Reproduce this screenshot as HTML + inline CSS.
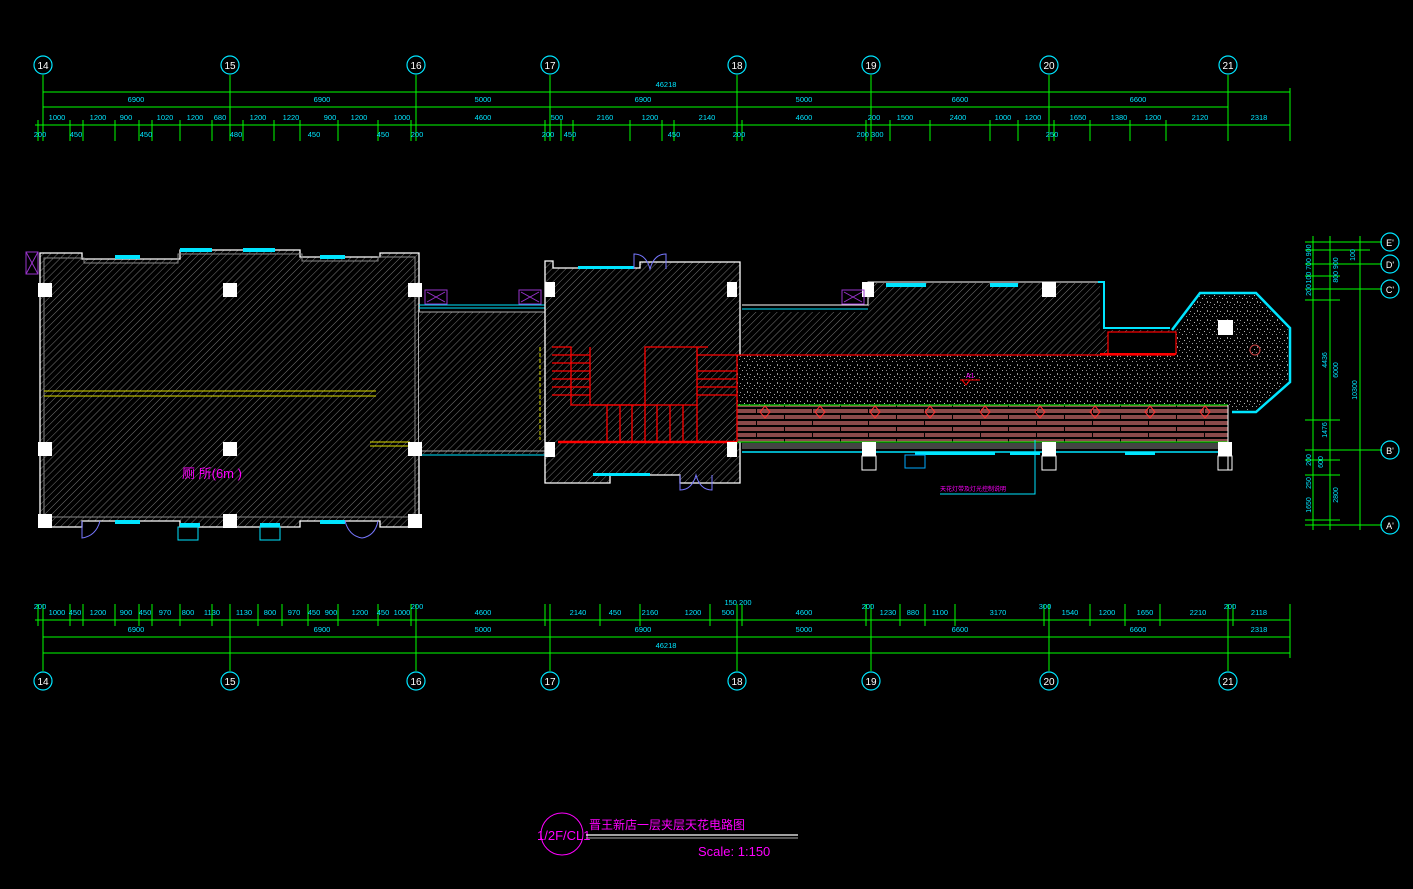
<!DOCTYPE html>
<html><head><meta charset="utf-8"><style>
html,body{margin:0;padding:0;background:#000;overflow:hidden}
svg{display:block}
text{font-family:"Liberation Sans","Noto Sans CJK SC",sans-serif}
</style></head><body>
<svg width="1413" height="889" viewBox="0 0 1413 889" xmlns="http://www.w3.org/2000/svg">
<defs>
<pattern id="h" width="5" height="5" patternUnits="userSpaceOnUse" patternTransform="rotate(45)">
<rect width="5" height="5" fill="#000"/><line x1="0" y1="0" x2="0" y2="5" stroke="#777" stroke-width="1"/>
</pattern>
<pattern id="d" width="10" height="9" patternUnits="userSpaceOnUse">
<rect width="10" height="9" fill="#000"/>
<rect x="2" y="1" width="1" height="1" fill="#aaa"/><rect x="7" y="4" width="1" height="2" fill="#999"/>
<rect x="4" y="7" width="1" height="1" fill="#bbb"/><rect x="9" y="8" width="1" height="1" fill="#888"/>
<rect x="6" y="1" width="1" height="1" fill="#888"/><rect x="0" y="5" width="1" height="1" fill="#999"/>
</pattern>
<pattern id="b" width="56" height="12" patternUnits="userSpaceOnUse">
<rect width="56" height="12" fill="#000"/>
<rect x="0" y="1" width="56" height="4" fill="#8a4a4a"/><rect x="0" y="7" width="56" height="4" fill="#8a4a4a"/>
<rect x="28" y="0" width="1" height="6" fill="#000"/><rect x="0" y="6" width="1" height="6" fill="#000"/>
</pattern>
</defs>

<g stroke="#00ff00" stroke-width="1" fill="none">
<line x1="43" y1="92" x2="1290" y2="92"/>
<line x1="43" y1="107" x2="1228" y2="107"/>
<line x1="35" y1="125" x2="1290" y2="125"/>
<line x1="1290" y1="88" x2="1290" y2="141"/>
<line x1="1228" y1="75" x2="1228" y2="141"/>
<line x1="1049" y1="75" x2="1049" y2="141"/>
<line x1="871" y1="75" x2="871" y2="141"/>
<line x1="737" y1="75" x2="737" y2="141"/>
<line x1="550" y1="75" x2="550" y2="141"/>
<line x1="416" y1="75" x2="416" y2="141"/>
<line x1="230" y1="75" x2="230" y2="141"/>
<line x1="43" y1="75" x2="43" y2="141"/>
<g>
<line x1="38" y1="120" x2="38" y2="141"/><line x1="70" y1="120" x2="70" y2="141"/><line x1="83" y1="120" x2="83" y2="141"/>
<line x1="115" y1="120" x2="115" y2="141"/><line x1="139" y1="120" x2="139" y2="141"/><line x1="152" y1="120" x2="152" y2="141"/>
<line x1="180" y1="120" x2="180" y2="141"/><line x1="212" y1="120" x2="212" y2="141"/><line x1="243" y1="120" x2="243" y2="141"/>
<line x1="274" y1="120" x2="274" y2="141"/><line x1="300" y1="120" x2="300" y2="141"/><line x1="338" y1="120" x2="338" y2="141"/>
<line x1="378" y1="120" x2="378" y2="141"/><line x1="411" y1="120" x2="411" y2="141"/><line x1="545" y1="120" x2="545" y2="141"/>
<line x1="561" y1="120" x2="561" y2="141"/><line x1="573" y1="120" x2="573" y2="141"/><line x1="630" y1="120" x2="630" y2="141"/>
<line x1="662" y1="120" x2="662" y2="141"/><line x1="674" y1="120" x2="674" y2="141"/><line x1="742" y1="120" x2="742" y2="141"/>
<line x1="866" y1="120" x2="866" y2="141"/><line x1="890" y1="120" x2="890" y2="141"/><line x1="930" y1="120" x2="930" y2="141"/>
<line x1="990" y1="120" x2="990" y2="141"/><line x1="1018" y1="120" x2="1018" y2="141"/><line x1="1054" y1="120" x2="1054" y2="141"/>
<line x1="1090" y1="120" x2="1090" y2="141"/><line x1="1130" y1="120" x2="1130" y2="141"/><line x1="1166" y1="120" x2="1166" y2="141"/>
</g>
<line x1="35" y1="620" x2="1290" y2="620"/>
<line x1="43" y1="637" x2="1290" y2="637"/>
<line x1="43" y1="653" x2="1290" y2="653"/>
<line x1="43" y1="604" x2="43" y2="671"/><line x1="230" y1="604" x2="230" y2="671"/>
<line x1="416" y1="604" x2="416" y2="671"/><line x1="550" y1="604" x2="550" y2="671"/>
<line x1="737" y1="604" x2="737" y2="671"/><line x1="871" y1="604" x2="871" y2="671"/>
<line x1="1049" y1="604" x2="1049" y2="671"/><line x1="1228" y1="604" x2="1228" y2="671"/>
<line x1="1290" y1="604" x2="1290" y2="658"/>
<g>
<line x1="38" y1="604" x2="38" y2="626"/><line x1="70" y1="604" x2="70" y2="626"/><line x1="83" y1="604" x2="83" y2="626"/>
<line x1="115" y1="604" x2="115" y2="626"/><line x1="139" y1="604" x2="139" y2="626"/><line x1="152" y1="604" x2="152" y2="626"/>
<line x1="180" y1="604" x2="180" y2="626"/><line x1="212" y1="604" x2="212" y2="626"/><line x1="258" y1="604" x2="258" y2="626"/>
<line x1="282" y1="604" x2="282" y2="626"/><line x1="308" y1="604" x2="308" y2="626"/><line x1="338" y1="604" x2="338" y2="626"/>
<line x1="378" y1="604" x2="378" y2="626"/><line x1="411" y1="604" x2="411" y2="626"/><line x1="545" y1="604" x2="545" y2="626"/>
<line x1="600" y1="604" x2="600" y2="626"/><line x1="640" y1="604" x2="640" y2="626"/><line x1="710" y1="604" x2="710" y2="626"/>
<line x1="742" y1="604" x2="742" y2="626"/><line x1="866" y1="604" x2="866" y2="626"/><line x1="900" y1="604" x2="900" y2="626"/>
<line x1="925" y1="604" x2="925" y2="626"/><line x1="955" y1="604" x2="955" y2="626"/><line x1="1044" y1="604" x2="1044" y2="626"/>
<line x1="1090" y1="604" x2="1090" y2="626"/><line x1="1125" y1="604" x2="1125" y2="626"/><line x1="1160" y1="604" x2="1160" y2="626"/>
<line x1="1233" y1="604" x2="1233" y2="626"/>
</g>
<line x1="1313" y1="236" x2="1313" y2="530"/>
<line x1="1330" y1="236" x2="1330" y2="530"/>
<line x1="1360" y1="236" x2="1360" y2="530"/>
<line x1="1305" y1="242" x2="1382" y2="242"/><line x1="1305" y1="250" x2="1370" y2="250"/>
<line x1="1305" y1="264" x2="1382" y2="264"/><line x1="1305" y1="276" x2="1340" y2="276"/>
<line x1="1305" y1="289" x2="1382" y2="289"/><line x1="1305" y1="300" x2="1340" y2="300"/>
<line x1="1305" y1="420" x2="1340" y2="420"/><line x1="1305" y1="450" x2="1382" y2="450"/>
<line x1="1305" y1="460" x2="1340" y2="460"/><line x1="1305" y1="475" x2="1340" y2="475"/>
<line x1="1305" y1="520" x2="1340" y2="520"/><line x1="1305" y1="525" x2="1382" y2="525"/>
</g>

<g fill="none" stroke="#00e5ff" stroke-width="1.2">
<circle cx="43" cy="65" r="9"/><circle cx="230" cy="65" r="9"/><circle cx="416" cy="65" r="9"/><circle cx="550" cy="65" r="9"/>
<circle cx="737" cy="65" r="9"/><circle cx="871" cy="65" r="9"/><circle cx="1049" cy="65" r="9"/><circle cx="1228" cy="65" r="9"/>
<circle cx="43" cy="681" r="9"/><circle cx="230" cy="681" r="9"/><circle cx="416" cy="681" r="9"/><circle cx="550" cy="681" r="9"/>
<circle cx="737" cy="681" r="9"/><circle cx="871" cy="681" r="9"/><circle cx="1049" cy="681" r="9"/><circle cx="1228" cy="681" r="9"/>
<circle cx="1390" cy="242" r="9"/><circle cx="1390" cy="264" r="9"/><circle cx="1390" cy="289" r="9"/>
<circle cx="1390" cy="450" r="9"/><circle cx="1390" cy="525" r="9"/>
</g>
<g fill="#fff" font-size="10" text-anchor="middle">
<text x="43" y="69">14</text><text x="230" y="69">15</text><text x="416" y="69">16</text><text x="550" y="69">17</text>
<text x="737" y="69">18</text><text x="871" y="69">19</text><text x="1049" y="69">20</text><text x="1228" y="69">21</text>
<text x="43" y="685">14</text><text x="230" y="685">15</text><text x="416" y="685">16</text><text x="550" y="685">17</text>
<text x="737" y="685">18</text><text x="871" y="685">19</text><text x="1049" y="685">20</text><text x="1228" y="685">21</text>
<text x="1390" y="246" font-size="9">E'</text><text x="1390" y="268" font-size="9">D'</text><text x="1390" y="293" font-size="9">C'</text>
<text x="1390" y="454" font-size="9">B'</text><text x="1390" y="529" font-size="9">A'</text>
</g>

<g fill="#00e5ff" font-size="7.5" text-anchor="middle">
<text x="666" y="87">46218</text>
<text x="136" y="102">6900</text><text x="322" y="102">6900</text><text x="483" y="102">5000</text><text x="643" y="102">6900</text>
<text x="804" y="102">5000</text><text x="960" y="102">6600</text><text x="1138" y="102">6600</text>
<text x="57" y="120">1000</text><text x="98" y="120">1200</text><text x="126" y="120">900</text><text x="165" y="120">1020</text>
<text x="195" y="120">1200</text><text x="220" y="120">680</text><text x="258" y="120">1200</text><text x="291" y="120">1220</text>
<text x="330" y="120">900</text><text x="359" y="120">1200</text><text x="402" y="120">1000</text><text x="483" y="120">4600</text>
<text x="557" y="120">500</text><text x="605" y="120">2160</text><text x="650" y="120">1200</text><text x="707" y="120">2140</text>
<text x="804" y="120">4600</text><text x="874" y="120">200</text><text x="905" y="120">1500</text><text x="958" y="120">2400</text>
<text x="1003" y="120">1000</text><text x="1033" y="120">1200</text><text x="1078" y="120">1650</text><text x="1119" y="120">1380</text>
<text x="1153" y="120">1200</text><text x="1200" y="120">2120</text><text x="1259" y="120">2318</text>
<text x="40" y="137">200</text><text x="76" y="137">450</text><text x="146" y="137">450</text><text x="236" y="137">480</text>
<text x="314" y="137">450</text><text x="383" y="137">450</text><text x="417" y="137">200</text><text x="548" y="137">200</text>
<text x="570" y="137">450</text><text x="674" y="137">450</text><text x="739" y="137">200</text><text x="870" y="137">200 300</text>
<text x="1052" y="137">250</text>
<text x="40" y="609">200</text><text x="417" y="609">200</text><text x="738" y="605">150 200</text><text x="868" y="609">200</text>
<text x="1045" y="609">300</text><text x="1230" y="609">200</text>
<text x="57" y="615">1000</text><text x="75" y="615">450</text><text x="98" y="615">1200</text><text x="126" y="615">900</text>
<text x="145" y="615">450</text><text x="165" y="615">970</text><text x="188" y="615">800</text><text x="212" y="615">1130</text>
<text x="244" y="615">1130</text><text x="270" y="615">800</text><text x="294" y="615">970</text><text x="314" y="615">450</text>
<text x="331" y="615">900</text><text x="360" y="615">1200</text><text x="383" y="615">450</text><text x="402" y="615">1000</text>
<text x="483" y="615">4600</text><text x="578" y="615">2140</text><text x="615" y="615">450</text><text x="650" y="615">2160</text>
<text x="693" y="615">1200</text><text x="728" y="615">500</text><text x="804" y="615">4600</text><text x="888" y="615">1230</text>
<text x="913" y="615">880</text><text x="940" y="615">1100</text><text x="998" y="615">3170</text><text x="1070" y="615">1540</text>
<text x="1107" y="615">1200</text><text x="1145" y="615">1650</text><text x="1198" y="615">2210</text><text x="1259" y="615">2118</text>
<text x="136" y="632">6900</text><text x="322" y="632">6900</text><text x="483" y="632">5000</text><text x="643" y="632">6900</text>
<text x="804" y="632">5000</text><text x="960" y="632">6600</text><text x="1138" y="632">6600</text><text x="1259" y="632">2318</text>
<text x="666" y="648">46218</text>
</g>
<g fill="#00e5ff" font-size="7" text-anchor="middle">
<text transform="translate(1311,264) rotate(-90)">100 700 900</text>
<text transform="translate(1311,290) rotate(-90)">200</text>
<text transform="translate(1327,360) rotate(-90)">4436</text>
<text transform="translate(1338,370) rotate(-90)">6000</text>
<text transform="translate(1357,390) rotate(-90)">10300</text>
<text transform="translate(1327,430) rotate(-90)">1476</text>
<text transform="translate(1311,460) rotate(-90)">200</text>
<text transform="translate(1323,462) rotate(-90)">600</text>
<text transform="translate(1311,483) rotate(-90)">250</text>
<text transform="translate(1311,505) rotate(-90)">1650</text>
<text transform="translate(1338,495) rotate(-90)">2800</text>
<text transform="translate(1338,270) rotate(-90)">800 900</text>
<text transform="translate(1355,255) rotate(-90)">100</text>
</g>

<path d="M40 253 H82 V259 H180 V250 H300 V257 H380 V253 H419 V527 H380 V521 H300 V527 H180 V521 H82 V527 H40 Z" fill="url(#h)" stroke="#fff" stroke-width="1.3"/>
<path d="M44 258 H84 V263 H178 V254 H302 V261 H378 V257 H415 V517 H44 Z" fill="none" stroke="#888"/>
<rect x="419" y="312" width="128" height="142" fill="url(#h)"/>
<line x1="419" y1="305" x2="547" y2="305" stroke="#00e5ff"/><line x1="419" y1="308" x2="547" y2="308" stroke="#00e5ff"/>
<line x1="419" y1="312" x2="547" y2="312" stroke="#aaa"/>
<line x1="419" y1="451" x2="547" y2="451" stroke="#aaa"/><line x1="419" y1="455" x2="547" y2="455" stroke="#00e5ff"/>
<path d="M545 261 H553 V268 H640 V262 H740 V483 H680 V475 H610 V483 H545 Z" fill="url(#h)" stroke="#fff" stroke-width="1.3"/>
<path d="M742 312 H868 V283 H1100 V330 H1180 L1170 355 H742 Z" fill="url(#h)"/>
<path d="M742 305 H868 V282 H1098" fill="none" stroke="#fff"/>
<path d="M1098 282 L1104 282 L1104 328 L1170 328" fill="none" stroke="#00e5ff" stroke-width="2"/>
<line x1="742" y1="309" x2="868" y2="309" stroke="#00e5ff"/>
<path d="M737 355 H1175 V333 L1200 295 H1255 L1288 330 V380 L1255 410 H1230 V405 H737 Z" fill="url(#d)"/>
<path d="M1172 330 L1200 293 H1256 L1290 328 V382 L1256 412 H1232" fill="none" stroke="#00e5ff" stroke-width="2.5"/>
<rect x="1218" y="320" width="15" height="15" fill="#fff"/>
<rect x="1108" y="332" width="68" height="22" fill="#000" stroke="#f00" stroke-width="1.2"/>
<line x1="1100" y1="354" x2="1176" y2="354" stroke="#f00" stroke-width="2"/>
<circle cx="1255" cy="350" r="5" fill="none" stroke="#c44"/>
<rect x="737" y="405" width="491" height="37" fill="url(#b)"/>
<line x1="737" y1="405" x2="1228" y2="405" stroke="#0f0"/>
<line x1="737" y1="442" x2="1228" y2="442" stroke="#0f0"/>
<rect x="742" y="443" width="486" height="6" fill="#444"/>
<line x1="742" y1="452" x2="1228" y2="452" stroke="#00e5ff" stroke-width="1.5"/>
<line x1="1228" y1="405" x2="1228" y2="470" stroke="#fff"/>
<g fill="none" stroke="#f33">
<path d="M765 406 l5 6 -5 6 -5 -6z"/><path d="M820 406 l5 6 -5 6 -5 -6z"/><path d="M875 406 l5 6 -5 6 -5 -6z"/>
<path d="M930 406 l5 6 -5 6 -5 -6z"/><path d="M985 406 l5 6 -5 6 -5 -6z"/><path d="M1040 406 l5 6 -5 6 -5 -6z"/>
<path d="M1095 406 l5 6 -5 6 -5 -6z"/><path d="M1150 406 l5 6 -5 6 -5 -6z"/><path d="M1205 406 l5 6 -5 6 -5 -6z"/>
</g>
<g stroke="#f00" fill="none" stroke-width="1.3">
<path d="M552 347 H571 V405 H645 V347 H708"/>
<line x1="552" y1="355" x2="590" y2="355"/><line x1="552" y1="363" x2="590" y2="363"/><line x1="552" y1="371" x2="590" y2="371"/>
<line x1="552" y1="379" x2="590" y2="379"/><line x1="552" y1="387" x2="590" y2="387"/><line x1="552" y1="395" x2="590" y2="395"/>
<line x1="590" y1="347" x2="590" y2="405"/>
<line x1="697" y1="347" x2="697" y2="442"/><line x1="697" y1="355" x2="737" y2="355"/>
<line x1="697" y1="371" x2="737" y2="371"/><line x1="697" y1="379" x2="737" y2="379"/><line x1="697" y1="387" x2="737" y2="387"/>
<line x1="697" y1="395" x2="737" y2="395"/>
<line x1="737" y1="355" x2="737" y2="442"/>
<line x1="590" y1="405" x2="697" y2="405"/>
<line x1="607" y1="405" x2="607" y2="442"/><line x1="620" y1="405" x2="620" y2="442"/><line x1="632" y1="405" x2="632" y2="442"/>
<line x1="645" y1="405" x2="645" y2="442"/><line x1="657" y1="405" x2="657" y2="442"/><line x1="670" y1="405" x2="670" y2="442"/>
<line x1="683" y1="405" x2="683" y2="442"/>
<line x1="558" y1="442" x2="737" y2="442" stroke-width="2.5"/>
<line x1="737" y1="355" x2="1175" y2="355"/>
</g>
<g stroke="#dd0" fill="none">
<line x1="44" y1="391" x2="376" y2="391"/><line x1="44" y1="396" x2="376" y2="396"/>
<line x1="370" y1="442" x2="410" y2="442"/><line x1="370" y1="446" x2="410" y2="446"/>
<line x1="540" y1="347" x2="540" y2="440" stroke-dasharray="4 2"/>
</g>
<g fill="#fff">
<rect x="38" y="283" width="14" height="14"/><rect x="223" y="283" width="14" height="14"/><rect x="408" y="283" width="14" height="14"/>
<rect x="38" y="442" width="14" height="14"/><rect x="223" y="442" width="14" height="14"/><rect x="408" y="442" width="14" height="14"/>
<rect x="38" y="514" width="14" height="14"/><rect x="223" y="514" width="14" height="14"/><rect x="408" y="514" width="14" height="14"/>
<rect x="545" y="282" width="10" height="15"/><rect x="727" y="282" width="10" height="15"/>
<rect x="545" y="442" width="10" height="15"/><rect x="727" y="442" width="10" height="15"/>
<rect x="862" y="282" width="12" height="15"/><rect x="1042" y="282" width="14" height="15"/>
<rect x="862" y="442" width="14" height="14"/><rect x="1042" y="442" width="14" height="14"/><rect x="1218" y="442" width="14" height="14"/>
</g>
<g fill="none" stroke="#fff">
<rect x="862" y="456" width="14" height="14"/><rect x="1042" y="456" width="14" height="14"/><rect x="1218" y="456" width="14" height="14"/>
</g>
<g fill="#00e5ff">
<rect x="115" y="255" width="25" height="4"/><rect x="180" y="248" width="32" height="4"/><rect x="243" y="248" width="32" height="4"/>
<rect x="320" y="255" width="25" height="4"/><rect x="115" y="520" width="25" height="4"/><rect x="180" y="523" width="20" height="4"/>
<rect x="260" y="523" width="20" height="4"/><rect x="320" y="520" width="25" height="4"/>
<rect x="578" y="266" width="56" height="3"/><rect x="593" y="473" width="57" height="3"/>
<rect x="886" y="283" width="40" height="4"/><rect x="990" y="283" width="28" height="4"/>
<rect x="915" y="452" width="80" height="3"/><rect x="1010" y="452" width="30" height="3"/><rect x="1125" y="452" width="30" height="3"/>
</g>
<rect x="178" y="527" width="20" height="13" fill="none" stroke="#00e5ff"/>
<rect x="260" y="527" width="20" height="13" fill="none" stroke="#00e5ff"/>
<rect x="905" y="455" width="20" height="13" fill="none" stroke="#0af"/>
<g fill="none" stroke="#77f">
<path d="M634 269 V254 Q646 254 650 269 Q654 254 666 254 V269"/>
<path d="M680 475 V490 Q692 490 696 475 Q700 490 712 490 V475"/>
<path d="M82 521 V538 Q96 536 100 521"/><path d="M345 521 Q349 536 362 538 Q375 536 378 521"/>
</g>
<g fill="none" stroke="#93c">
<rect x="26" y="252" width="12" height="22"/><path d="M26 252 L38 274 M38 252 L26 274"/>
<rect x="425" y="290" width="22" height="14"/><path d="M427 292 L445 302 M445 292 L427 302"/>
<rect x="519" y="290" width="22" height="14"/><path d="M521 292 L539 302 M539 292 L521 302"/>
<rect x="842" y="290" width="22" height="14"/><path d="M844 292 L862 302 M862 292 L844 302"/>
</g>
<path d="M940 494 H1035 V440" fill="none" stroke="#00e5ff"/>
<text x="940" y="491" font-size="6" fill="#f0f">天花灯带及灯光控制说明</text>
<text x="966" y="378" font-size="7" fill="#f0f">A1</text>
<path d="M960 380 h20 M962 380 l4 5 4 -5" stroke="#f00" fill="none"/>
<text x="182" y="478" font-size="13" fill="#f0f">厕 所(6m )</text>

<circle cx="562" cy="834" r="21" fill="none" stroke="#f0f"/>
<text x="537" y="840" font-size="13" fill="#f0f">1/2F/CL1</text>
<text x="589" y="829" font-size="12" fill="#f0f">晋王新店一层夹层天花电路图</text>
<line x1="586" y1="835" x2="798" y2="835" stroke="#fff" stroke-width="1.2"/>
<line x1="586" y1="838" x2="798" y2="838" stroke="#aaa"/>
<text x="698" y="856" font-size="13" fill="#f0f">Scale: 1:150</text>
</svg>
</body></html>
